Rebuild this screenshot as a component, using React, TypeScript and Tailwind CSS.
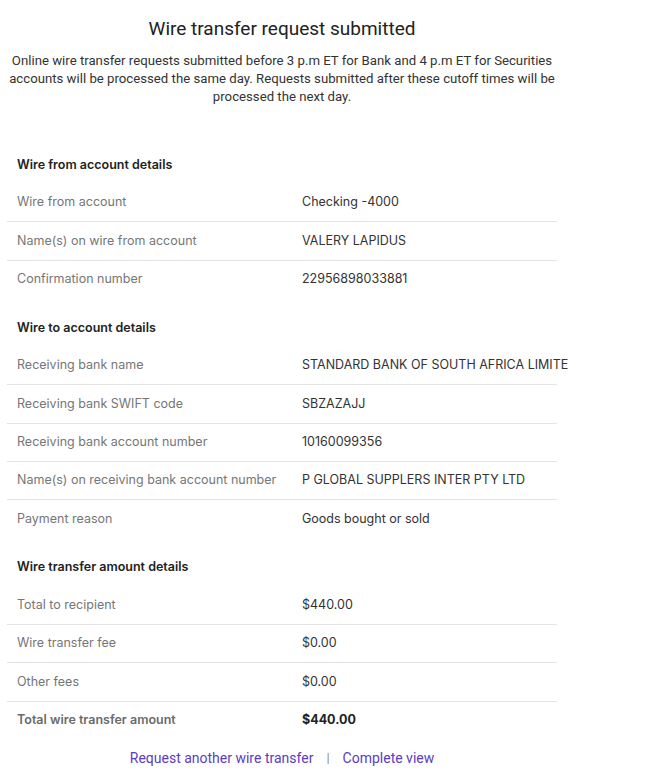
import React from "react";

type Row = { label: string; value: string; strong?: boolean };
type Section = { title: string; rows: Row[] };

const sections: Section[] = [
  {
    title: "Wire from account details",
    rows: [
      { label: "Wire from account", value: "Checking -4000" },
      { label: "Name(s) on wire from account", value: "VALERY LAPIDUS" },
      { label: "Confirmation number", value: "22956898033881" },
    ],
  },
  {
    title: "Wire to account details",
    rows: [
      { label: "Receiving bank name", value: "STANDARD BANK OF SOUTH AFRICA LIMITE" },
      { label: "Receiving bank SWIFT code", value: "SBZAZAJJ" },
      { label: "Receiving bank account number", value: "10160099356" },
      { label: "Name(s) on receiving bank account number", value: "P GLOBAL SUPPLERS INTER PTY LTD" },
      { label: "Payment reason", value: "Goods bought or sold" },
    ],
  },
  {
    title: "Wire transfer amount details",
    rows: [
      { label: "Total to recipient", value: "$440.00" },
      { label: "Wire transfer fee", value: "$0.00" },
      { label: "Other fees", value: "$0.00" },
      { label: "Total wire transfer amount", value: "$440.00", strong: true },
    ],
  },
];

export default function App() {
  return (
    <div className="min-h-[784px] w-[655px] bg-white">
      <div className="flex w-[564px] flex-col pt-[17px]">
        <h1 className="text-center text-[19px] leading-[24px] text-[#222222] font-['Roboto',sans-serif] font-normal">
          Wire transfer request submitted
        </h1>
        <p className="mt-[11px] text-center text-[13.2px] leading-[18px] text-[#333333] font-['Roboto',sans-serif]">
          Online wire transfer requests submitted before 3 p.m ET for Bank and 4 p.m ET for Securities accounts will be processed the same day. Requests submitted after these cutoff times will be processed the next day.
        </p>
        <div className="mt-[30px] ml-[7px] flex w-[550px] flex-col font-['Inter',sans-serif] text-[12.5px]">
          {sections.map((s) => (
            <div key={s.title} className="mt-[10px]">
              <div className="flex h-[38px] items-center pl-[10px] font-semibold text-[#222222]">{s.title}</div>
              {s.rows.map((r, i) => (
                <div
                  key={r.label}
                  className={
                    "flex h-[38.33px] items-center " +
                    (i < s.rows.length - 1 ? "border-b border-[#e3e3e3]" : "")
                  }
                >
                  <div
                    className={
                      "w-[295px] shrink-0 pl-[10px] " +
                      (r.strong ? "font-semibold text-[#6b6b6b]" : "text-[#767676]")
                    }
                  >
                    {r.label}
                  </div>
                  <div
                    className={
                      "whitespace-nowrap " + (r.strong ? "font-bold text-[#222222]" : "text-[#333333]")
                    }
                  >
                    {r.value}
                  </div>
                </div>
              ))}
            </div>
          ))}
        </div>
        <div className="mt-[9px] flex items-center justify-center gap-[13px] text-[14px] leading-[18px] font-['Roboto',sans-serif]">
          <a className="text-[#5b3cc4]">Request another wire transfer</a>
          <span className="text-[#888888] text-[13px]">|</span>
          <a className="text-[#5b3cc4]">Complete view</a>
        </div>
      </div>
    </div>
  );
}
